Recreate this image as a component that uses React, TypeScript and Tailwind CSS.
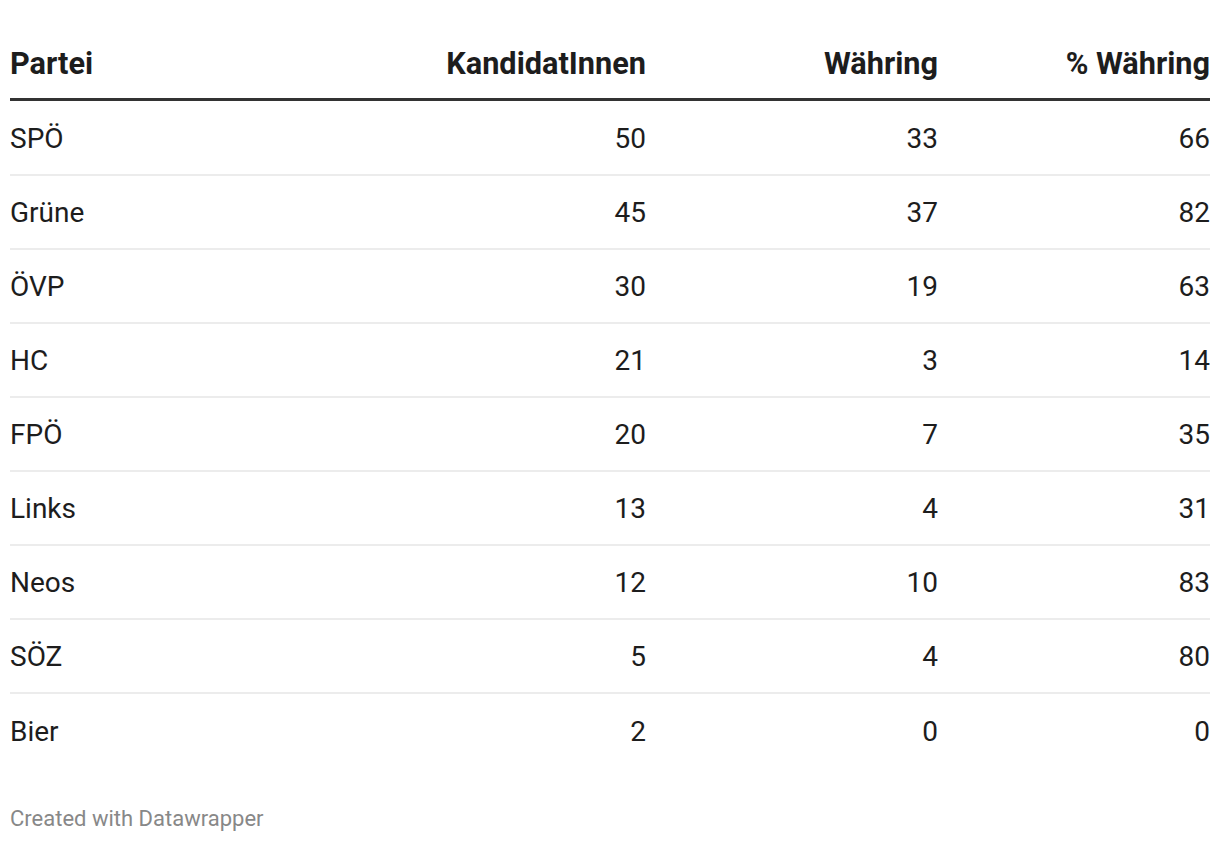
const rows: [string, number, number, number][] = [
  ['SPÖ', 50, 33, 66],
  ['Grüne', 45, 37, 82],
  ['ÖVP', 30, 19, 63],
  ['HC', 21, 3, 14],
  ['FPÖ', 20, 7, 35],
  ['Links', 13, 4, 31],
  ['Neos', 12, 10, 83],
  ['SÖZ', 5, 4, 80],
  ['Bier', 2, 0, 0],
];

export default function App() {
  return (
    <div className="w-[1220px] h-[842px] bg-white px-[10px] font-['Roboto',sans-serif] text-[#1d1d1d]">
      {/* Header */}
      <div className="grid grid-cols-[346px_290px_292px_272px] border-b-[3px] border-[#333333] pt-[46px] pb-[16px] text-[30.7px] leading-[36px] font-bold">
        <div>Partei</div>
        <div className="text-right">KandidatInnen</div>
        <div className="text-right">Währing</div>
        <div className="text-right">% Währing</div>
      </div>

      {/* Rows */}
      <div className="pt-px">
        {rows.map((r, i) => (
          <div
            key={r[0]}
            className={`grid grid-cols-[346px_290px_292px_272px] items-center h-[74px] pt-[2px] text-[28px] leading-[32px] ${
              i < rows.length - 1 ? 'border-b-2 border-[#ececec]' : ''
            }`}
          >
            <div>{r[0]}</div>
            <div className="text-right">{r[1]}</div>
            <div className="text-right">{r[2]}</div>
            <div className="text-right">{r[3]}</div>
          </div>
        ))}
      </div>

      {/* Footer */}
      <div className="pt-[38px] text-[22px] leading-[26px] text-[#888888]">Created with Datawrapper</div>
    </div>
  );
}
